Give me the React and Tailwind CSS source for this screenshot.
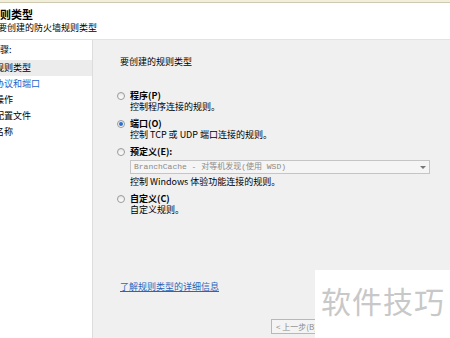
import React from "react";

const cjk = "font-['SimSun','Noto_Sans_CJK_SC',sans-serif]";

const Radio = ({ checked }) => (
  <span className="relative w-[8px] h-[8px] rounded-full border border-[#9a9a9a] bg-gradient-to-b from-[#e6e6e6] to-[#ffffff] flex items-center justify-center shrink-0">
    {checked && <span className="w-[4px] h-[4px] rounded-full bg-[#2c6fd0]" />}
  </span>
);

const Option = ({ label, desc, checked, children }) => (
  <div className="flex flex-col">
    <div className="flex items-center gap-[5px] h-[11px]">
      <Radio checked={checked} />
      <span className="font-bold text-[9px] leading-[11px] text-black">{label}</span>
    </div>
    {children}
    <div className="pl-[13px] text-[9px] leading-[11px] text-black">{desc}</div>
  </div>
);

export default function App() {
  const steps = ["规则类型", "协议和端口", "操作", "配置文件", "名称"];
  return (
    <div className={`w-[450px] h-[338px] overflow-hidden relative bg-[#f0f0f0] flex flex-col ${cjk}`}>
      <div className="h-[3px] bg-[#f2eedc] border-b border-[#cfc9b0] shrink-0" />
      <div className="h-[37px] bg-white border-b border-[#e3e3e3] shrink-0 flex flex-col pt-[5px]">
        <div className="ml-[-11px] font-bold text-[11px] leading-[12px] text-black">规则类型</div>
        <div className="ml-[-2px] mt-[3px] text-[9px] leading-[10px] text-black">要创建的防火墙规则类型</div>
      </div>
      <div className="flex flex-1">
        <div className="w-[93px] bg-white border-r border-[#dcdcdc] flex flex-col pt-[5px]">
          <div className="ml-[-9px] text-[9px] leading-[10px] text-black">步骤:</div>
          <div className="mt-[5px] flex flex-col">
            {steps.map((s, i) => (
              <div
                key={s}
                className={`h-[16px] flex items-center text-[9px] ${i === 0 ? "bg-[#ececec]" : ""} ${i === 1 ? "text-[#1a66c9]" : "text-black"}`}
              >
                <span className="ml-[-5px]">{s}</span>
              </div>
            ))}
          </div>
        </div>
        <div className="flex-1 flex flex-col pl-[27px] pt-[17px] relative">
          <div className="text-[9px] leading-[10px] text-black">要创建的规则类型</div>
          <div className="mt-[23px] ml-[-3px] flex flex-col gap-[6px]">
            <Option label="程序(P)" desc="控制程序连接的规则。" />
            <Option label="端口(O)" desc="控制 TCP 或 UDP 端口连接的规则。" checked />
            <Option label="预定义(E):" desc="控制 Windows 体验功能连接的规则。">
              <div className="ml-[13px] mt-[3px] mb-[2px] h-[14px] w-[300px] border border-[#c5c5c5] bg-[#f5f5f5] flex items-center justify-between px-[3px]">
                <span className="text-[8px] text-[#8a8a8a] font-['Liberation_Mono','Noto_Sans_CJK_SC',monospace]">BranchCache - 对等机发现(使用 WSD)</span>
                <span className="w-0 h-0 border-l-[3px] border-r-[3px] border-t-[3px] border-l-transparent border-r-transparent border-t-[#777]" />
              </div>
            </Option>
            <Option label="自定义(C)" desc="自定义规则。" />
          </div>
          <div className="mt-[67px] text-[9px] leading-[10px] text-[#2a66b8] underline">了解规则类型的详细信息</div>
          <div className="mt-[27px] ml-[151px] w-[60px] h-[15px] border border-[#b8b8b8] bg-[#f4f4f4] text-[8px] text-[#8a8a8a] flex items-center pl-[4px]">&lt; 上一步(B)</div>
        </div>
      </div>
      <div className="absolute left-[315px] top-[270px] w-[135px] h-[68px] bg-white flex items-start pt-[13px] pl-[6px]">
        <span className="text-[30px] leading-[34px] text-[#c8c8c8] tracking-[1px] font-['Noto_Sans_CJK_SC',sans-serif]">软件技巧</span>
      </div>
    </div>
  );
}
